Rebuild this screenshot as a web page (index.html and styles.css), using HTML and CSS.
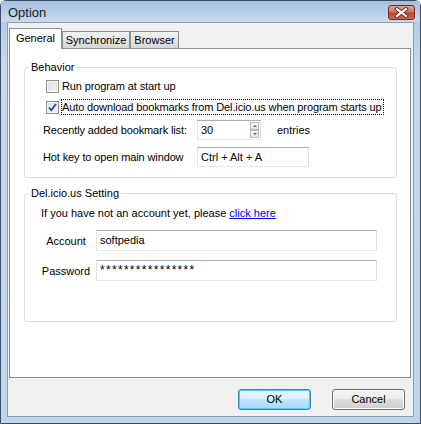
FILE: index.html
```html
<!DOCTYPE html>
<html lang="en">
<head>
    <meta charset="UTF-8">
    <title>Option</title>
    <link rel="stylesheet" href="styles.css">
</head>
<body>
    <div class="window">
        <div class="titlebar">
            <span class="title">Option</span>
            <span class="close-btn">
                <svg width="15" height="11" viewBox="0 0 15 11">
                    <path d="M3 2 L12 9 M12 2 L3 9" stroke="#5a2a24" stroke-width="4" stroke-linecap="square"/>
                    <path d="M3 2 L12 9 M12 2 L3 9" stroke="#ffffff" stroke-width="2.2" stroke-linecap="square"/>
                </svg>
            </span>
        </div>
        <div class="client">
            <div class="tabs">
                <div class="tab tab-general active">General</div>
                <div class="tab tab-sync">Synchronize</div>
                <div class="tab tab-browser">Browser</div>
            </div>
            <div class="panel">
                <div class="group group-behavior">
                    <div class="group-title">Behavior</div>
                    <div class="check-row">
                        <span class="checkbox"></span>
                        <span class="check-text">Run program at start up</span>
                    </div>
                    <div class="check-row check-row-2">
                        <span class="checkbox checked">
                            <svg width="11" height="11" viewBox="0 0 11 11">
                                <path d="M2 5.5 L4.3 8.3 L9 2" fill="none" stroke="#2c4d8c" stroke-width="1.8"/>
                            </svg>
                        </span>
                        <span class="check-text focused">Auto download bookmarks from Del.icio.us when program starts up</span>
                    </div>
                    <div class="field-row field-recent">
                        <span class="field-label">Recently added bookmark list:</span>
                        <div class="textbox spin">
                            <span class="spin-value">30</span>
                            <span class="spin-buttons">
                                <span class="spin-btn"><span class="arrow-up"></span></span>
                                <span class="spin-btn"><span class="arrow-down"></span></span>
                            </span>
                        </div>
                        <span class="unit">entries</span>
                    </div>
                    <div class="field-row field-hotkey">
                        <span class="field-label">Hot key to open main window</span>
                        <div class="textbox hotkey">Ctrl + Alt + A</div>
                    </div>
                </div>

                <div class="group group-delicious">
                    <div class="group-title">Del.icio.us Setting</div>
                    <div class="intro">If you have not an account yet, please <a href="#" class="link">click here</a></div>
                    <div class="login-row login-account">
                        <span class="login-label">Account</span>
                        <div class="textbox login-input">softpedia</div>
                    </div>
                    <div class="login-row login-password">
                        <span class="login-label">Password</span>
                        <div class="textbox login-input password">****************</div>
                    </div>
                </div>
            </div>
            <div class="buttons">
                <span class="btn btn-default">OK</span>
                <span class="btn">Cancel</span>
            </div>
        </div>
    </div>
</body>
</html>
```

FILE: styles.css
```css
body {
    margin: 0;
    font-family: 'Liberation Sans', Arial, sans-serif;
    font-size: 11px;
    color: #000;
    background: #fff;
}

.window {
    width: 421px;
    height: 424px;
    box-sizing: border-box;
    border: 1px solid #3b4b60;
    border-radius: 6px 6px 0 0;
    background: linear-gradient(to bottom, #a9c4e3, #c4d8ee 60px, #bfd5ec);
    display: flex;
    flex-direction: column;
}

.titlebar {
    height: 21px;
    display: flex;
    justify-content: space-between;
    align-items: flex-start;
    background: linear-gradient(to bottom, #a4bfe0, #c9dbef);
}

.title {
    padding: 4px 0 0 7px;
    font-size: 13px;
    line-height: 15px;
    color: #1b1b1b;
}

.close-btn {
    margin: 4px 5px 0 0;
    width: 27px;
    height: 15px;
    box-sizing: border-box;
    border: 1px solid #6b2e28;
    border-radius: 3px;
    background: linear-gradient(to bottom, #e6a293, #d5705f 45%, #c2432e 55%, #d26a4e);
    display: flex;
    align-items: center;
    justify-content: center;
}

.client {
    flex: 1;
    margin: 0 6px 6px 6px;
    border: 1px solid #8a9db5;
    background: #f0f0f0;
    padding: 5px 2px 0 1px;
    display: flex;
    flex-direction: column;
}

.tabs {
    display: flex;
    align-items: flex-end;
    height: 20px;
}

.tab {
    box-sizing: border-box;
    height: 17px;
    border: 1px solid #898c95;
    border-bottom: none;
    background: linear-gradient(to bottom, #f3f3f3, #e4e4e4 50%, #d6d6d6);
    padding-top: 2px;
    line-height: 13px;
    text-align: center;
}

.tab.active {
    height: 21px;
    margin-bottom: -1px;
    position: relative;
    z-index: 1;
    background: #fff;
    padding-top: 3px;
}

.tab-general { width: 53px; }
.tab-sync { width: 68px; }
.tab-browser { width: 49px; }

.panel {
    height: 330px;
    box-sizing: border-box;
    border: 1px solid #898c95;
    background: #fff;
    padding: 18px 13px 0 14px;
}

.group {
    border: 1px solid #d5dfe5;
    border-radius: 3px;
}

.group-title {
    width: max-content;
    margin: -7px 0 0 4px;
    padding: 0 2px;
    line-height: 13px;
    background: #fff;
}

.check-row {
    display: flex;
    align-items: center;
    height: 16px;
    margin: 4px 0 0 21px;
}

.check-row-2 {
    margin-top: 5px;
}

.checkbox {
    width: 13px;
    height: 13px;
    box-sizing: border-box;
    border: 1px solid #8f8f8f;
    background: linear-gradient(135deg, #dcdcdc, #f6f6f6);
    box-shadow: inset 0 0 0 1px #f4f4f4;
    margin-right: 2px;
    display: flex;
    align-items: center;
    justify-content: center;
}

.check-text {
    border: 1px dotted transparent;
    padding: 0 1px 0 0;
    line-height: 14px;
    letter-spacing: -0.12px;
}

.check-text.focused {
    border-color: #000;
}

.field-row {
    display: flex;
    align-items: center;
    margin-left: 18px;
}

.field-recent {
    margin-top: 5px;
}

.field-hotkey {
    margin-top: 7px;
    margin-bottom: 10px;
}

.field-label {
    width: 154px;
    letter-spacing: -0.12px;
}

.textbox {
    box-sizing: border-box;
    height: 20px;
    border: 1px solid;
    border-color: #abadb3 #dbdfe6 #e3e9ef #e2e3ea;
    background: #fff;
    padding: 0 3px;
    line-height: 18px;
}

.spin {
    width: 64px;
    display: flex;
    justify-content: space-between;
    padding-right: 1px;
}

.spin-buttons {
    width: 9px;
    display: flex;
    flex-direction: column;
    padding-top: 1px;
}

.spin-btn {
    height: 8px;
    box-sizing: border-box;
    border: 1px solid #b5bcc7;
    background: linear-gradient(to bottom, #f8f9fa, #dfe4ea);
    display: flex;
    align-items: center;
    justify-content: center;
}

.arrow-up {
    border-left: 2px solid transparent;
    border-right: 2px solid transparent;
    border-bottom: 2px solid #4e6c9c;
}

.arrow-down {
    border-left: 2px solid transparent;
    border-right: 2px solid transparent;
    border-top: 2px solid #4e6c9c;
}

.unit {
    margin-left: 16px;
}

.hotkey {
    width: 112px;
}

.group-delicious {
    margin-top: 15px;
    padding-bottom: 40px;
}

.intro {
    margin: 7px 0 0 16px;
    line-height: 13px;
}

.link {
    color: #0000ff;
    text-decoration: underline;
}

.login-row {
    display: flex;
    align-items: center;
    margin-left: 16px;
}

.login-account {
    margin-top: 10px;
}

.login-password {
    margin-top: 9px;
}

.login-label {
    width: 50px;
    margin-right: 5px;
    text-align: center;
}

.login-input {
    width: 281px;
    height: 21px;
}

.password {
    font-size: 12px;
    letter-spacing: 1.3px;
}

.buttons {
    display: flex;
    justify-content: flex-end;
    gap: 21px;
    margin-top: 11px;
    padding-right: 6px;
}

.btn {
    width: 73px;
    height: 21px;
    box-sizing: border-box;
    border: 1px solid #707070;
    border-radius: 3px;
    background: linear-gradient(to bottom, #f2f2f2, #ebebeb 50%, #dddddd 50%, #cfcfcf);
    box-shadow: inset 0 0 0 1px #fbfbfb;
    text-align: center;
    line-height: 19px;
}

.btn-default {
    border-color: #3c7fb1;
    box-shadow: inset 0 0 0 1px #48d0f2;
    background: linear-gradient(to bottom, #eaf6fd, #d9f0fc 50%, #bee6fd 50%, #a7d9f5);
}
```
